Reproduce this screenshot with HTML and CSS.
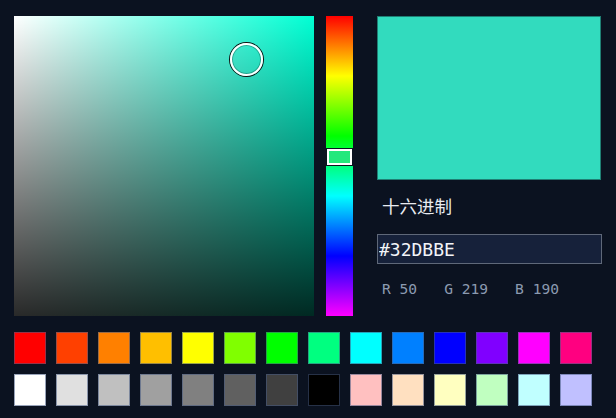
FILE: index.html
```html
<!DOCTYPE html>
<html lang="zh">
<head>
<meta charset="utf-8">
<title>颜色选择器</title>
<link rel="stylesheet" href="styles.css">
</head>
<body>
<div class="picker">
  <div class="top">
    <div class="sv" style="background-color: hsl(170, 100%, 50%);">
      <div class="sv-thumb" style="left: 216px; top: 27px;"></div>
    </div>
    <div class="hue">
      <div class="hue-thumb" style="top: 133px;"></div>
    </div>
    <div class="side">
      <div class="preview" style="background: #32dbbe;"></div>
      <div class="label">十六进制</div>
      <input class="hex" type="text" value="#32DBBE">
      <div class="rgb">
        <span>R 50</span>
        <span>G 219</span>
        <span>B 190</span>
      </div>
    </div>
  </div>
  <div class="swatches">
    <div class="sw" style="background:#ff0000"></div>
    <div class="sw" style="background:#ff4000"></div>
    <div class="sw" style="background:#ff8000"></div>
    <div class="sw" style="background:#ffbf00"></div>
    <div class="sw" style="background:#ffff00"></div>
    <div class="sw" style="background:#80ff00"></div>
    <div class="sw" style="background:#00ff00"></div>
    <div class="sw" style="background:#00ff80"></div>
    <div class="sw" style="background:#00ffff"></div>
    <div class="sw" style="background:#0080ff"></div>
    <div class="sw" style="background:#0000ff"></div>
    <div class="sw" style="background:#8000ff"></div>
    <div class="sw" style="background:#ff00ff"></div>
    <div class="sw" style="background:#ff0080"></div>
    <div class="sw" style="background:#ffffff"></div>
    <div class="sw" style="background:#e0e0e0"></div>
    <div class="sw" style="background:#c0c0c0"></div>
    <div class="sw" style="background:#a0a0a0"></div>
    <div class="sw" style="background:#808080"></div>
    <div class="sw" style="background:#606060"></div>
    <div class="sw" style="background:#404040"></div>
    <div class="sw" style="background:#000000"></div>
    <div class="sw" style="background:#ffc0c0"></div>
    <div class="sw" style="background:#ffe0c0"></div>
    <div class="sw" style="background:#ffffc0"></div>
    <div class="sw" style="background:#c0ffc0"></div>
    <div class="sw" style="background:#c0ffff"></div>
    <div class="sw" style="background:#c0c0ff"></div>
  </div>
</div>
</body>
</html>
```
FILE: styles.css
```css
html, body {
  margin: 0;
  background: #0b1220;
}

body {
  font-family: "Noto Sans CJK SC", "Noto Sans", sans-serif;
  color: #e6e9ef;
}

.picker {
  padding: 16px 14px;
}

.top {
  display: flex;
  align-items: flex-start;
}

/* saturation / value field */
.sv {
  position: relative;
  width: 300px;
  height: 300px;
  flex: none;
  background-image:
    linear-gradient(to top, rgba(0, 0, 0, 0.84), rgba(0, 0, 0, 0)),
    linear-gradient(to right, #fff, rgba(255, 255, 255, 0));
}

.sv-thumb {
  position: absolute;
  width: 29px;
  height: 29px;
  border: 2px solid #fff;
  border-radius: 50%;
  box-shadow: 0 0 0 1px #111, inset 0 0 0 1px rgba(0, 0, 0, 0.25);
}

/* hue strip */
.hue {
  position: relative;
  width: 27px;
  height: 300px;
  margin-left: 12px;
  flex: none;
  background: linear-gradient(to bottom,
    #ff0000 0%, #ffff00 20%, #00ff00 40%, #00ffff 60%, #0000ff 80%, #ff00ff 100%);
}

.hue-thumb {
  position: absolute;
  left: 1px;
  width: 21px;
  height: 12px;
  border: 2px solid #fff;
  background: #22e87c;
  box-shadow: 0 0 0 1px #0b1220;
}

.side {
  margin-left: 24px;
  width: 225px;
  display: flex;
  flex-direction: column;
}

.preview {
  width: 222px;
  height: 162px;
  border: 1px solid #1f7f74;
}

.label {
  margin-top: 14px;
  margin-left: 5px;
  font-size: 17.5px;
  line-height: 24px;
  color: #e8ebf0;
}

.hex {
  margin: 16px 0 0;
  width: 225px;
  height: 30px;
  box-sizing: border-box;
  padding: 0 0 0 1px;
  border: 1px solid #5f6879;
  background: #16213a;
  color: #f2f4f8;
  font-family: "DejaVu Sans Mono", monospace;
  font-size: 18px;
  outline: none;
}

.rgb {
  margin-top: 15px;
  margin-left: 5px;
  display: flex;
  gap: 27px;
  font-family: "DejaVu Sans Mono", monospace;
  font-size: 14.6px;
  line-height: 20px;
  color: #8b9ab0;
}

/* preset colours */
.swatches {
  margin-top: 16px;
  display: grid;
  grid-template-columns: repeat(14, 32px);
  grid-auto-rows: 32px;
  gap: 10px;
}

.sw {
  box-sizing: border-box;
  border: 1px solid rgba(70, 90, 130, 0.55);
}
```
